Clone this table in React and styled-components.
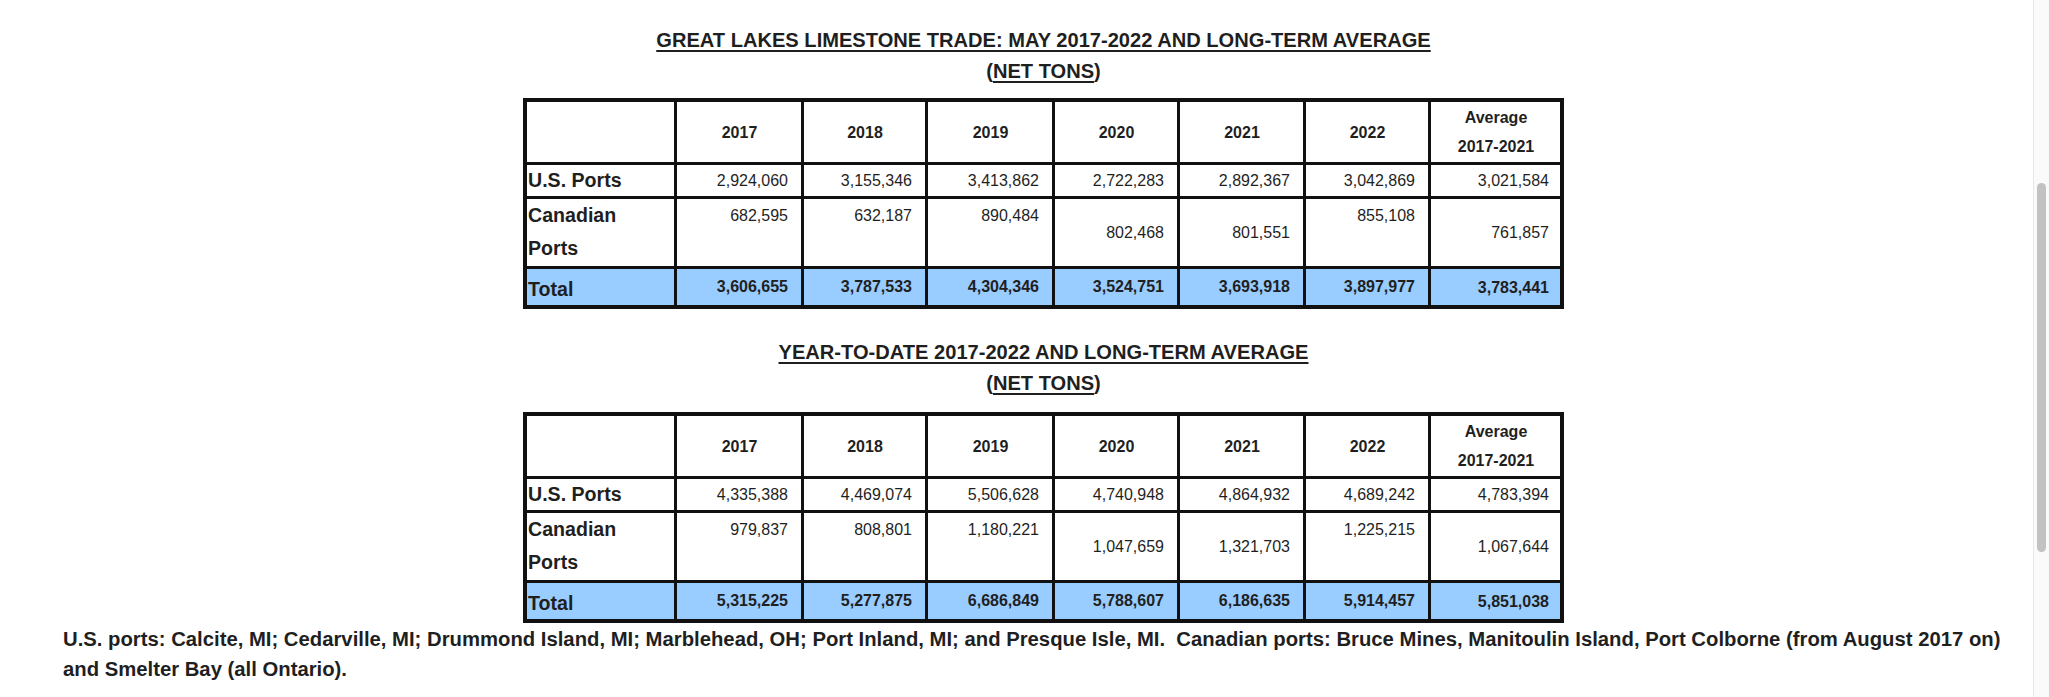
import React from 'react';
import styled, { createGlobalStyle } from 'styled-components';

const GlobalStyle = createGlobalStyle`
    html, body {
        margin: 0;
        padding: 0;
        background: #fff;
        overflow: hidden;
    }
    body {
        font-family: "Liberation Sans", Arial, Helvetica, sans-serif;
        color: #1f1f1f;
    }
`;

const Page = styled.div`
    width: 2049px;
    height: 697px;
    padding-top: 25px;
    box-sizing: border-box;
`;

const Section = styled.div`
    width: 1041px;
    margin-left: 523px;
`;

const Heading = styled.div`
    text-align: center;
    font-size: 20.1px;
    font-weight: bold;
    line-height: 31px;
    margin-top: ${props => props.$top || 0}px;
    margin-bottom: ${props => props.$bottom || 0}px;
`;

const Line = styled.div`
    text-decoration: ${props => props.$plain ? 'none' : 'underline'};
    text-decoration-thickness: 2px;
    text-underline-offset: 3px;

    u {
        text-decoration-thickness: 2px;
        text-underline-offset: 3px;
    }
`;

const Grid = styled.div`
    display: grid;
    grid-template-columns: 147px 124px 121px 124px 122px 123px 122px 129px;
    grid-template-rows: 60px 31px 67px 36px;
    gap: 3px;
    border: 4px solid #111;
    background: #111;
`;

const Cell = styled.div`
    display: flex;
    flex-direction: column;
    justify-content: ${props =>
        props.$valign === 'top' ? 'flex-start' :
        props.$valign === 'bottom' ? 'flex-end' : 'center'};
    background: ${props => props.$total ? '#99ccff' : '#fff'};
    box-sizing: border-box;
    padding-top: ${props => props.$shift > 0 ? props.$shift * 2 : 0}px;
    padding-bottom: ${props => props.$shift < 0 ? -props.$shift * 2 : 0}px;
    padding-left: 1px;
    padding-right: ${props => props.$pr || 0}px;
`;

const Label = styled.span`
    font-size: 19.6px;
    font-weight: bold;
    line-height: 33px;
    text-align: left;
`;

const HeadText = styled.span`
    font-size: 16px;
    font-weight: bold;
    line-height: 29px;
    text-align: center;
`;

const Num = styled.span`
    font-size: 16px;
    font-weight: ${props => props.$bold ? 'bold' : 'normal'};
    line-height: 33px;
    text-align: right;
`;

const Footer = styled.p`
    margin: 2px 0 0 63px;
    width: 1965px;
    font-size: 20.3px;
    font-weight: bold;
    line-height: 29.5px;
    white-space: pre-wrap;
`;

const Track = styled.div`
    position: fixed;
    top: 0;
    right: 0;
    width: 15px;
    height: 697px;
    background: #fafafa;
    border-left: 1px solid #e8e8e8;
`;

const Thumb = styled.div`
    position: absolute;
    top: 183px;
    left: 3px;
    width: 9px;
    height: 369px;
    border-radius: 5px;
    background: #c2c2c2;
`;

const YEARS = ['2017', '2018', '2019', '2020', '2021', '2022'];
// the Canadian row mixes top and middle alignment, as the source sheet does
const CANADIAN_ALIGN = ['top', 'top', 'top', 'middle', 'middle', 'top', 'middle'];

const tables = [
    {
        title: 'GREAT LAKES LIMESTONE TRADE: MAY 2017-2022 AND LONG-TERM AVERAGE',
        us: ['2,924,060', '3,155,346', '3,413,862', '2,722,283', '2,892,367', '3,042,869', '3,021,584'],
        canadian: ['682,595', '632,187', '890,484', '802,468', '801,551', '855,108', '761,857'],
        total: ['3,606,655', '3,787,533', '4,304,346', '3,524,751', '3,693,918', '3,897,977', '3,783,441'],
    },
    {
        title: 'YEAR-TO-DATE 2017-2022 AND LONG-TERM AVERAGE',
        us: ['4,335,388', '4,469,074', '5,506,628', '4,740,948', '4,864,932', '4,689,242', '4,783,394'],
        canadian: ['979,837', '808,801', '1,180,221', '1,047,659', '1,321,703', '1,225,215', '1,067,644'],
        total: ['5,315,225', '5,277,875', '6,686,849', '5,788,607', '6,186,635', '5,914,457', '5,851,038'],
    },
];

const padFor = (i) => (i === 6 ? 11 : 13);

const TradeTable = ({ data }) => (
    <Grid>
        <Cell />
        {YEARS.map(y => (
            <Cell key={y}><HeadText>{y}</HeadText></Cell>
        ))}
        <Cell>
            <HeadText>Average<br />2017-2021</HeadText>
        </Cell>

        <Cell><Label>U.S. Ports</Label></Cell>
        {data.us.map((v, i) => (
            <Cell key={i} $pr={padFor(i)}><Num>{v}</Num></Cell>
        ))}

        <Cell $valign="top"><Label>Canadian<br />Ports</Label></Cell>
        {data.canadian.map((v, i) => (
            <Cell key={i} $valign={CANADIAN_ALIGN[i]} $pr={padFor(i)}><Num>{v}</Num></Cell>
        ))}

        <Cell $total $shift={2}><Label>Total</Label></Cell>
        {data.total.map((v, i) => (
            <Cell key={i} $total $shift={i === 6 ? 0 : -1} $pr={padFor(i)}>
                <Num $bold>{v}</Num>
            </Cell>
        ))}
    </Grid>
);

const App = () => {
    return (
        <Page>
            <GlobalStyle />
            <Section>
                <Heading $bottom={11}>
                    <Line>{tables[0].title}</Line>
                    <Line $plain>(<u>NET TONS</u>)</Line>
                </Heading>
                <TradeTable data={tables[0]} />

                <Heading $top={28} $bottom={13}>
                    <Line>{tables[1].title}</Line>
                    <Line $plain>(<u>NET TONS</u>)</Line>
                </Heading>
                <TradeTable data={tables[1]} />
            </Section>

            <Footer>
                {'U.S. ports: Calcite, MI; Cedarville, MI; Drummond Island, MI; Marblehead, OH; Port Inland, MI; and Presque Isle, MI.  Canadian ports: Bruce Mines, Manitoulin Island, Port Colborne (from August 2017 on) and Smelter Bay (all Ontario).'}
            </Footer>

            <Track><Thumb /></Track>
        </Page>
    );
};

export default App;
